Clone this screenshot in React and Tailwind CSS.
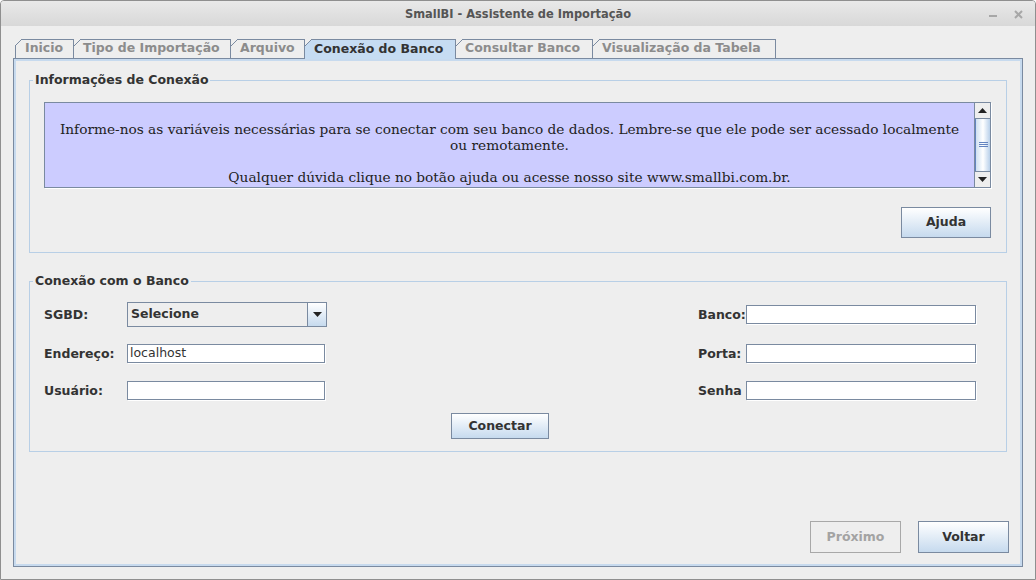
const BORDER = "border-[#7a8aa0]";

function Tab({ label, w, active, first }) {
  return (
    <div
      className={`relative flex items-center border-t border-r ${BORDER} ${first ? "border-l" : ""} ${
        active
          ? "h-[20px] bg-[#c6dcf2] text-[#333333] z-10"
          : "h-[19px] bg-[#eeeeee] text-[#8c8c8c]"
      } pl-[9px] pb-[1px] text-[12.5px] font-bold leading-none whitespace-nowrap`}
      style={{ width: w }}
    >
      <svg
        className={`absolute top-[-1px] ${first ? "left-[-1px]" : "left-0"}`}
        width="8"
        height="8"
        viewBox="0 0 8 8"
        shapeRendering="crispEdges"
      >
        <polygon points="0,0 7,0 0,7" fill="#eeeeee" />
        <line x1="0" y1="7" x2="7" y2="0" stroke="#7a8aa0" strokeWidth="1" />
      </svg>
      <span>{label}</span>
    </div>
  );
}

function GradButton({ children, w, h, disabled }) {
  return (
    <div
      className={`flex items-center justify-center border text-[12.5px] font-bold leading-none ${
        disabled
          ? "border-[#a8a8a8] bg-[#eeeeee] text-[#a3a3a3]"
          : "border-[#7a8aa0] bg-gradient-to-b from-white to-[#c6daee] text-[#333333]"
      }`}
      style={{ width: w, height: h }}
    >
      {children}
    </div>
  );
}

function Field({ w, value }) {
  return (
    <div
      className="h-[19px] border border-[#7a8aa0] bg-white shadow-[1px_1px_0_#ffffff] flex items-center pl-[2px] text-[12.5px] text-[#333333] leading-none"
      style={{ width: w }}
    >
      {value}
    </div>
  );
}

function Label({ children, w }) {
  return (
    <div
      className="pt-[1px] text-[12.5px] font-bold text-[#333333] leading-none whitespace-nowrap"
      style={{ width: w }}
    >
      {children}
    </div>
  );
}

export default function App() {
  const tabs = [
    { label: "Inicio", w: 59 },
    { label: "Tipo de Importação", w: 157 },
    { label: "Arquivo", w: 74 },
    { label: "Conexão do Banco", w: 151, active: true },
    { label: "Consultar Banco", w: 137 },
    { label: "Visualização da Tabela", w: 183 },
  ];

  return (
    <div
      className="w-[1036px] h-[580px] bg-[#eeeeee] border border-[#8f8f8f] rounded-t-[4px] overflow-hidden flex flex-col"
      style={{ fontFamily: '"DejaVu Sans", sans-serif' }}
    >
      {/* Title bar */}
      <div className="relative h-[25px] shrink-0 bg-gradient-to-b from-[#e9e9e9] to-[#d8d8d8] flex items-center justify-center">
        <span
          className="text-[12.7px] font-bold text-[#555555]"
          style={{ fontFamily: '"DejaVu Sans Condensed", "Roboto", sans-serif' }}
        >
          SmallBI - Assistente de Importação
        </span>
        <div className="absolute right-[12px] top-[9px] flex items-center gap-[16px]">
          <svg width="9" height="9" viewBox="0 0 9 9">
            <rect x="0" y="5" width="8" height="2" fill="#a7a7a7" />
          </svg>
          <svg width="9" height="9" viewBox="0 0 9 9">
            <path d="M1 1 L8 8 M8 1 L1 8" stroke="#a7a7a7" strokeWidth="2" />
          </svg>
        </div>
      </div>

      {/* Body */}
      <div className="flex-1 flex flex-col px-[12px] pt-[13px] pb-[12px]">
        {/* Tabs */}
        <div className="relative z-10 flex items-start h-[19px] pl-[2px]">
          {tabs.map((t, i) => (
            <Tab key={t.label} {...t} first={i === 0} />
          ))}
        </div>

        {/* Tab panel */}
        <div className={`flex-1 border ${BORDER} flex`}>
          <div className="flex-1 border-2 border-[#c7daee] flex flex-col">
            {/* Group 1 */}
            <fieldset className="mx-[13px] mt-[11px] border border-[#b8cfe6] p-0">
              <legend className="ml-[3px] px-[2px] text-[12.5px] font-bold text-[#333333] leading-[16px]">
                Informações de Conexão
              </legend>
              <div className="pl-[14px] pr-[15px] pt-[14px] pb-[14px] flex flex-col items-end">
                <div className="w-full h-[86px] border border-[#7a8aa0] shadow-[1px_1px_0_#ffffff] bg-[#ccccff] flex">
                  <div
                    className="flex-1 pt-[2px] text-center text-[13.7px] leading-[16px] text-[#222222]"
                    style={{ fontFamily: '"DejaVu Serif", serif' }}
                  >
                    <div className="h-[16px]"></div>
                    <div className="whitespace-nowrap">
                      Informe-nos as variáveis necessárias para se conectar com seu banco de dados. Lembre-se que ele pode ser acessado localmente
                    </div>
                    <div>ou remotamente.</div>
                    <div className="h-[16px]"></div>
                    <div>Qualquer dúvida clique no botão ajuda ou acesse nosso site www.smallbi.com.br.</div>
                  </div>
                  {/* Scrollbar */}
                  <div className="w-[16px] flex flex-col bg-[#eeeeee] border-l border-[#7a8aa0]">
                    <div className="h-[16px] flex items-center justify-center bg-[#eeeeee] border-b border-[#7a8aa0]">
                      <svg width="9" height="5" viewBox="0 0 9 5">
                        <polygon points="0,5 9,5 4.5,0" fill="#222222" />
                      </svg>
                    </div>
                    <div className="flex-1 bg-gradient-to-r from-[#cfe0f2] via-white to-[#b9d0ea] border-l border-[#6384c0] flex items-center justify-center">
                      <svg width="9" height="6" viewBox="0 0 9 6">
                        <rect x="0" y="0" width="9" height="1" fill="#6384c0" />
                        <rect x="0" y="2" width="9" height="1" fill="#6384c0" />
                        <rect x="0" y="4" width="9" height="1" fill="#6384c0" />
                      </svg>
                    </div>
                    <div className="h-[16px] flex items-center justify-center bg-[#eeeeee] border-t border-[#7a8aa0]">
                      <svg width="9" height="5" viewBox="0 0 9 5">
                        <polygon points="0,0 9,0 4.5,5" fill="#222222" />
                      </svg>
                    </div>
                  </div>
                </div>
                <div className="mt-[19px]">
                  <GradButton w={90} h={31}>Ajuda</GradButton>
                </div>
              </div>
            </fieldset>

            {/* Group 2 */}
            <fieldset className="mx-[13px] mt-[20px] border border-[#b8cfe6] p-0">
              <legend className="ml-[3px] px-[2px] text-[12.5px] font-bold text-[#333333] leading-[16px]">
                Conexão com o Banco
              </legend>
              <div className="pl-[14px] pr-[30px] pt-[13px] pb-[12px] flex flex-col">
                {/* Row 1 */}
                <div className="h-[25px] flex items-center justify-between">
                  <div className="flex items-center">
                    <Label w={83}>SGBD:</Label>
                    <div className="w-[200px] h-[25px] border border-[#7a8aa0] flex">
                      <div className="flex-1 bg-[#eeeeee] flex items-center pl-[3px] text-[12.5px] font-bold text-[#333333] leading-none">
                        Selecione
                      </div>
                      <div className="w-[19px] border-l border-[#7a8aa0] bg-gradient-to-b from-white to-[#c6daee] flex items-center justify-center">
                        <svg width="9" height="5" viewBox="0 0 9 5">
                          <polygon points="0,0 9,0 4.5,5" fill="#222222" />
                        </svg>
                      </div>
                    </div>
                  </div>
                  <div className="flex items-center">
                    <Label w={48}>Banco:</Label>
                    <Field w={230} />
                  </div>
                </div>
                {/* Row 2 */}
                <div className="mt-[17px] h-[19px] flex items-center justify-between">
                  <div className="flex items-center">
                    <Label w={83}>Endereço:</Label>
                    <Field w={198} value="localhost" />
                  </div>
                  <div className="flex items-center">
                    <Label w={48}>Porta:</Label>
                    <Field w={230} />
                  </div>
                </div>
                {/* Row 3 */}
                <div className="mt-[18px] h-[19px] flex items-center justify-between">
                  <div className="flex items-center">
                    <Label w={83}>Usuário:</Label>
                    <Field w={198} />
                  </div>
                  <div className="flex items-center">
                    <Label w={48}>Senha</Label>
                    <Field w={230} />
                  </div>
                </div>
                {/* Button */}
                <div className="mt-[13px] ml-[407px]">
                  <GradButton w={98} h={26}>Conectar</GradButton>
                </div>
              </div>
            </fieldset>

            <div className="flex-1"></div>

            {/* Bottom buttons */}
            <div className="flex justify-end gap-[17px] pr-[11px] pb-[11px]">
              <GradButton w={91} h={32} disabled>Próximo</GradButton>
              <GradButton w={91} h={32}>Voltar</GradButton>
            </div>
          </div>
        </div>
      </div>
    </div>
  );
}
